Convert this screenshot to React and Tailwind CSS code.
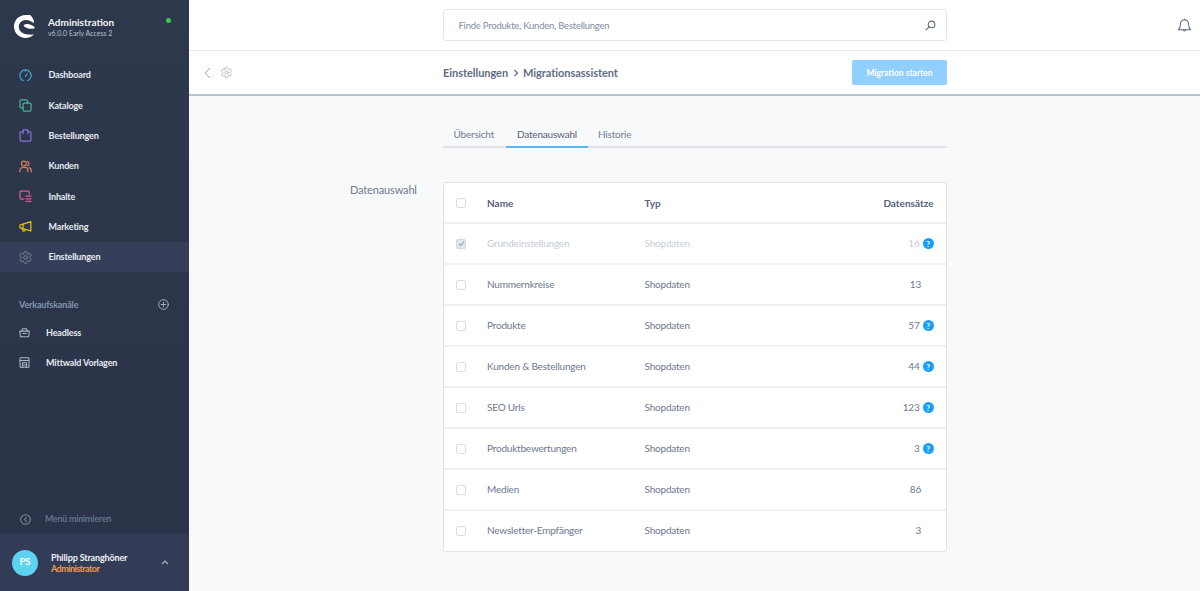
import React from "react";
import { Settings } from "lucide-react";

const Ico = ({ c, children, s = 13, sw = 1.5, cls = "" }) => (
  <svg width={s} height={s} viewBox="0 0 16 16" fill="none" stroke={c} strokeWidth={sw} strokeLinecap="round" strokeLinejoin="round" className={"shrink-0 " + cls}>
    {children}
  </svg>
);

const navItems = [
  ["Dashboard", <Ico c="#45a3c9"><path d="M5.200 14.300A6.900 6.900 0 1 1 10.800 14.300" /><path d="M8 9l2-3.200" /><path d="M8 1.200v1.400" /></Ico>],
  ["Kataloge", <Ico c="#41b592"><path d="M5 11H2.600A1.400 1.400 0 0 1 1.200 9.600V2.600A1.400 1.400 0 0 1 2.600 1.200h6.600A1.400 1.400 0 0 1 10.600 2.600V5" /><rect x="5" y="5" width="9.800" height="9.800" rx="1.400" /></Ico>],
  ["Bestellungen", <Ico c="#8674d6"><path d="M5 3.400H2.400a1 1 0 0 0-1 1v9.400a1 1 0 0 0 1 1h11.200a1 1 0 0 0 1-1V4.400a1 1 0 0 0-1-1H11" /><path d="M5 5.600V1.200h6v4.400" /></Ico>],
  ["Kunden", <Ico c="#dd7c5e"><circle cx="6" cy="4.400" r="3" /><path d="M1 14.600v-1.400a4 4 0 0 1 4-4h2a4 4 0 0 1 4 4v1.400" /><path d="M10.200 1.600a3 3 0 0 1 0 5.600" /><path d="M12.400 9.400a4 4 0 0 1 2.800 3.800v1.400" /></Ico>],
  ["Inhalte", <Ico c="#e4559f"><path d="M12.600 5V2.400a1 1 0 0 0-1-1H2.200a1 1 0 0 0-1 1v7.800a1 1 0 0 0 1 1H6" /><path d="M8.600 7.600h6.200M8.600 10.800h6.200M8.600 14h6.200" /></Ico>],
  ["Marketing", <Ico c="#e6c40f"><path d="M1.200 6.200 5 5l9.600-3v11.400L5 10.800l-3.800-1z" /><path d="M5 5v5.800" /><path d="M4 10.600l.6 2.400a1 1 0 0 0 1.200.7l1.200-.3a1 1 0 0 0 .7-1.200l-.3-1" /></Ico>],
  ["Einstellungen", <Settings size={15} color="#7f8b9e" strokeWidth={1.400} className="-ml-[1px] shrink-0" />],
];

const rows = [
  ["Grundeinstellungen", "16", true, true],
  ["Nummernkreise", "13", false],
  ["Produkte", "57", true],
  ["Kunden & Bestellungen", "44", true],
  ["SEO Urls", "123", true],
  ["Produktbewertungen", "3", true],
  ["Medien", "86", false],
  ["Newsletter-Empfänger", "3", false],
];

const Help = () => (
  <span className="w-[11px] h-[11px] rounded-full bg-[#189eff] text-white text-[8px] font-bold flex items-center justify-center leading-none">?</span>
);

const Row = ({ name, count, help, disabled }) => {
  const c = disabled ? "text-[#c5ccd8]" : "text-[#6d7890]";
  return (
    <div className={"h-[41px] flex items-center border-t-2 border-[#eef0f4] bg-white text-[10px] tracking-[-0.2px] pl-[12px] pr-[12.500px] " + c}>
      <span className={"w-[10px] h-[10px] rounded-[2px] border flex items-center justify-center mr-[21px] " + (disabled ? "bg-[#e4e8ee] border-[#d4dae3]" : "bg-white border-[#d8dde6]")}>
        {disabled && (
          <svg width="7" height="7" viewBox="0 0 8 8" fill="none" stroke="#9aa5b5" strokeWidth="1.300"><path d="M1 4.200 3.200 6.400 7 1.600" /></svg>
        )}
      </span>
      <span className="w-[157.500px]">{name}</span>
      <span className="flex-1">Shopdaten</span>
      <span className="flex items-center justify-end gap-[3px]">
        <span>{count}</span>
        {help ? <Help /> : <span className="w-[9.500px]" />}
      </span>
    </div>
  );
};

const navText = "text-[9px] tracking-[-0.15px] font-bold";

export default function App() {
  return (
    <div className="h-[591px] w-[1200px] overflow-hidden flex font-['Lato','Liberation_Sans',sans-serif] bg-[#f8f9fb]">
      <aside className="w-[189px] shrink-0 flex flex-col bg-gradient-to-b from-[#2e384d] to-[#2a3347] text-white">
        <div className="h-[52px] flex items-start pl-[14px] pt-[15px] pr-[18px]">
          <svg width="23" height="23" viewBox="0 0 24 24" className="shrink-0">
            <path fill="#fff" d="M12 0C5.400 0 0 5.300 0 12s5.400 12 12 12c3.400 0 6.600-1.400 8.700-3.600-3.100.3-7.600.1-10.700-1.100C6.800 18 5 15.500 5 12.300 5 8.500 8.200 5.200 12.400 5.200c3.300 0 6.100 1.400 8.500 3.300.2-3.200-1.800-6.500-3.900-8.500C15.400.1 13.700 0 12 0z" />
            <path fill="#fff" d="M10 10.500C13 8.500 18 9 22 13.200 20 14.800 17 14.600 14 13.700 12 13.100 10 12.100 10 10.500z" />
          </svg>
          <div className="ml-[11px] leading-none">
            <div className="text-[10px] font-bold mt-[2px] text-[#f2f4f8]">Administration</div>
            <div className="text-[7px] mt-[3px] text-[#b7c0cf]">v6.0.0 Early Access 2</div>
          </div>
          <span className="ml-auto mt-[3px] w-[5px] h-[5px] rounded-full bg-[#2fd14a]" />
        </div>
        <nav className="mt-[8px]">
          {navItems.map(([label, icon]) => (
            <div key={label} className={"h-[30.330px] flex items-center pl-[19px] " + (label === "Einstellungen" ? "bg-[#353f59]" : "")}>
              <span className="w-[13px] mr-[16.500px] flex items-center">{icon}</span>
              <span className={navText + " text-[#e6eaf2]"}>{label}</span>
            </div>
          ))}
        </nav>
        <div className="mt-[24px] pl-[19px] pr-[20px] flex items-center justify-between h-[16px]">
          <span className={navText + " text-[#8496ad]"}>Verkaufskanäle</span>
          <Ico c="#a9b4c4" s={11} sw={1.400}><circle cx="8" cy="8" r="7" /><path d="M8 4.600v6.800M4.600 8h6.800" /></Ico>
        </div>
        <div className="mt-[5px]">
          <div className="h-[30.330px] flex items-center pl-[18.500px]">
            <Ico c="#aeb7c6" s={11}><path d="M1 6h14l-1 7.500a1 1 0 0 1-1 .800H3a1 1 0 0 1-1-.800z" /><path d="M4 6 5 2.500h6L12 6" /><path d="M5.500 9.500h5" /></Ico>
            <span className={navText + " ml-[16.500px] text-[#e6eaf2]"}>Headless</span>
          </div>
          <div className="h-[30.330px] flex items-center pl-[18.500px]">
            <Ico c="#aeb7c6" s={11}><rect x="1.500" y="1" width="13" height="14" rx="1" /><path d="M1.500 5h13M5 8.500h6V15M5 8.500V15M5 11.700h6" /></Ico>
            <span className={navText + " ml-[16.500px] text-[#e6eaf2]"}>Mittwald Vorlagen</span>
          </div>
        </div>
        <div className="mt-auto h-[30px] flex items-center pl-[20px]">
          <Ico c="#7a889c" s={11}><circle cx="8" cy="8" r="7" /><path d="M9.500 4.800 6.500 8l3 3.200" /></Ico>
          <span className="text-[9px] tracking-[-0.3px] font-bold ml-[14px] text-[#64738b]">Menü minimieren</span>
        </div>
        <div className="h-[57px] bg-[#323c56] flex items-center pl-[12px] pr-[20px]">
          <span className="w-[26px] h-[26px] rounded-full bg-[#5dd3f1] text-white text-[9.500px] font-bold flex items-center justify-center">PS</span>
          <div className="ml-[13px] leading-none">
            <div className={navText + " text-[#eef1f6]"}>Philipp Stranghöner</div>
            <div className="text-[9px] font-bold tracking-[-0.55px] text-[#f0994a] mt-[2px]">Administrator</div>
          </div>
          <svg width="8" height="5" viewBox="0 0 8 5" fill="none" stroke="#aeb7c6" strokeWidth="1.100" className="ml-auto"><path d="M1 4 4 1l3 3" /></svg>
        </div>
      </aside>

      <main className="flex-1 flex flex-col min-w-0">
        <header className="h-[51px] shrink-0 bg-white border-b border-[#e3e7ee] flex items-center relative">
          <div className="ml-[253.500px] w-[504.500px] h-[32px] rounded-[3px] border border-[#e0e4ec] flex items-center justify-between pl-[15px] pr-[10px] bg-white">
            <span className="text-[9.500px] tracking-[-0.23px] text-[#838d9f] pt-[2px]">Finde Produkte, Kunden, Bestellungen</span>
            <Ico c="#5d6b82" s={11} sw={1.600} cls="mt-[1px]"><circle cx="9.500" cy="6.500" r="4.800" /><path d="M6 10 1.500 14.500" /></Ico>
          </div>
          <svg width="15" height="15" viewBox="0 0 16 16" fill="none" stroke="#5d6b82" strokeWidth="1.100" className="absolute left-[988px] top-[18px]" strokeLinecap="round" strokeLinejoin="round"><path d="M8 1.800a4.300 4.300 0 0 0-4.300 4.300c0 4-1.200 5.500-2.200 6.400h13c-1-.9-2.200-2.400-2.200-6.400A4.300 4.300 0 0 0 8 1.800z" /><path d="M6.500 12.700a1.600 1.600 0 0 0 3 0" /><path d="M8 1.800V1" /></svg>
        </header>
        <div className="h-[45px] shrink-0 bg-white border-b-2 border-[#b7c2d1] flex items-center">
          <svg width="8" height="12" viewBox="0 0 8 12" fill="none" stroke="#a3adbb" strokeWidth="1" className="ml-[14px]"><path d="M7 1 2 6l5 5" /></svg>
          <Settings size={13} color="#a3adbb" strokeWidth={1.500} className="ml-[8.500px]" />
          <div className="ml-[210.500px] pt-[1px] flex items-center text-[11px] font-bold text-[#5f6d85] tracking-[-0.05px]">
            <span>Einstellungen</span>
            <svg width="6" height="8" viewBox="0 0 6 8" fill="none" stroke="#5f6d85" strokeWidth="1.200" className="mx-[4.500px]"><path d="M1.500 1 4.500 4 1.500 7" /></svg>
            <span>Migrationsassistent</span>
          </div>
          <button className="ml-auto mr-[253px] w-[95px] h-[25px] pt-[1px] rounded-[2px] bg-[#90cfff] text-white text-[8.500px] font-bold">Migration starten</button>
        </div>
        <div className="flex-1 pl-[254px] pr-[253px] relative">
          <div className="mt-[26px] h-[26px] border-b-2 border-[#e0e4ea] flex text-[10px] tracking-[-0.2px] text-[#717c91] items-start">
            <span className="h-[26px] w-[63px] pl-[10.500px] leading-[24px]">Übersicht</span>
            <span className="h-[26px] w-[82px] border-b-2 border-[#5cb8f5] text-center text-[#56627a] leading-[24px]">Datenauswahl</span>
            <span className="h-[26px] pl-[10px] leading-[24px]">Historie</span>
          </div>
          <div className="absolute left-[161px] top-[86px] text-[11px] tracking-[-0.15px] text-[#6e7a8f]">Datenauswahl</div>
          <section className="mt-[34px] pb-[1px] rounded-[3px] border border-[#dfe3ea] bg-white overflow-hidden">
            <div className="h-[39px] flex items-center text-[10px] font-bold text-[#56627a] pl-[12px] pr-[12.500px] pt-[1px]">
              <span className="w-[10px] h-[10px] rounded-[2px] border border-[#d8dde6] mr-[21px] -mt-[1px]" />
              <span className="w-[157.500px]">Name</span>
              <span className="flex-1">Typ</span>
              <span>Datensätze</span>
            </div>
            {rows.map(([n, c, h, d]) => (
              <Row key={n} name={n} count={c} help={h} disabled={d} />
            ))}
          </section>
        </div>
      </main>
    </div>
  );
}
